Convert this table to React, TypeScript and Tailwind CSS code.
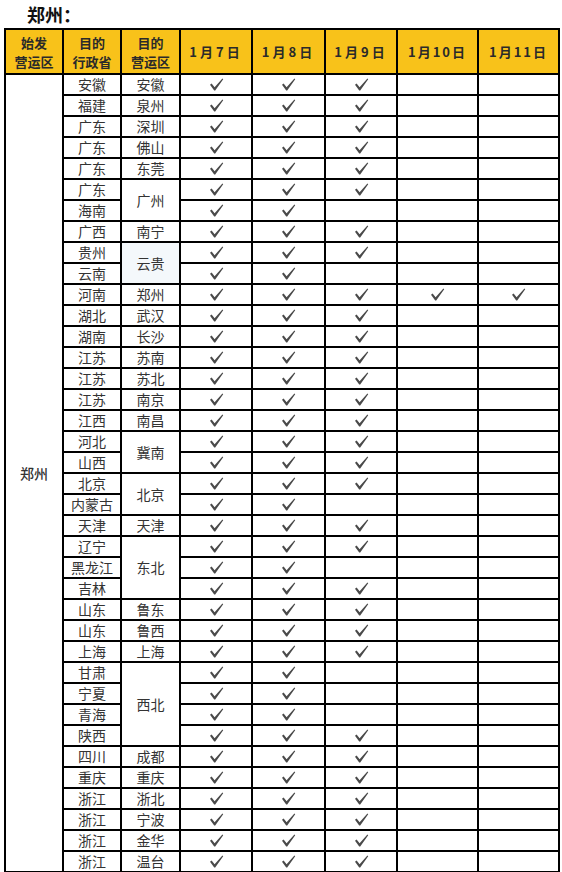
import React from "react";

type Row = { prov: string; area?: string; span?: number; checks: number };

const rows: Row[] = [
  { prov: "安徽", area: "安徽", checks: 3 },
  { prov: "福建", area: "泉州", checks: 3 },
  { prov: "广东", area: "深圳", checks: 3 },
  { prov: "广东", area: "佛山", checks: 3 },
  { prov: "广东", area: "东莞", checks: 3 },
  { prov: "广东", area: "广州", span: 2, checks: 3 },
  { prov: "海南", checks: 2 },
  { prov: "广西", area: "南宁", checks: 3 },
  { prov: "贵州", area: "云贵", span: 2, checks: 3 },
  { prov: "云南", checks: 2 },
  { prov: "河南", area: "郑州", checks: 5 },
  { prov: "湖北", area: "武汉", checks: 3 },
  { prov: "湖南", area: "长沙", checks: 3 },
  { prov: "江苏", area: "苏南", checks: 3 },
  { prov: "江苏", area: "苏北", checks: 3 },
  { prov: "江苏", area: "南京", checks: 3 },
  { prov: "江西", area: "南昌", checks: 3 },
  { prov: "河北", area: "冀南", span: 2, checks: 3 },
  { prov: "山西", checks: 3 },
  { prov: "北京", area: "北京", span: 2, checks: 3 },
  { prov: "内蒙古", checks: 2 },
  { prov: "天津", area: "天津", checks: 3 },
  { prov: "辽宁", area: "东北", span: 3, checks: 3 },
  { prov: "黑龙江", checks: 2 },
  { prov: "吉林", checks: 3 },
  { prov: "山东", area: "鲁东", checks: 3 },
  { prov: "山东", area: "鲁西", checks: 3 },
  { prov: "上海", area: "上海", checks: 3 },
  { prov: "甘肃", area: "西北", span: 4, checks: 2 },
  { prov: "宁夏", checks: 2 },
  { prov: "青海", checks: 2 },
  { prov: "陕西", checks: 3 },
  { prov: "四川", area: "成都", checks: 3 },
  { prov: "重庆", area: "重庆", checks: 3 },
  { prov: "浙江", area: "浙北", checks: 3 },
  { prov: "浙江", area: "宁波", checks: 3 },
  { prov: "浙江", area: "金华", checks: 3 },
  { prov: "浙江", area: "温台", checks: 3 },
];

const dates = ["1月7日", "1月8日", "1月9日", "1月10日", "1月11日"];
const dateCls = [
  "w-[72px] tracking-[3px]",
  "w-[73px] tracking-[3px]",
  "w-[72px] tracking-[3px]",
  "w-[81px] tracking-[2px]",
  "w-[81px] tracking-[2px]",
];

const cell = "border-2 border-black p-0 text-center align-middle";

function Check() {
  return (
    <svg width="15" height="13" viewBox="0 0 15 13" className="mx-auto block">
      <polygon points="1,6.8 2.6,5.6 5.6,9.2 13.4,0.6 14.2,1.2 6.2,12.4 5.2,12.4" fill="#4a4a4a" />
    </svg>
  );
}

export default function App() {
  return (
    <div
      className="w-[562px] h-[872px] bg-white overflow-hidden"
      style={{ fontFamily: '"Noto Sans CJK SC", "Noto Sans", sans-serif' }}
    >
      <div className="h-[28px] pl-[27px] pt-[3px] text-[18px] font-bold leading-[22px] text-[#111]">
        郑州：
      </div>
      <table className="ml-[4px] w-[555px] border-collapse table-fixed">
        <thead>
          <tr className="h-[45px] bg-[#f8c21a] text-[13px] font-bold text-[#2a2a2a]">
            <th className={`${cell} w-[58px] leading-[19px]`}>
              始发
              <br />
              营运区
            </th>
            <th className={`${cell} w-[58px] leading-[19px]`}>
              目的
              <br />
              行政省
            </th>
            <th className={`${cell} w-[59px] leading-[19px]`}>
              目的
              <br />
              营运区
            </th>
            {dates.map((d, i) => (
              <th key={d} className={`${cell} ${dateCls[i]}`}>
                {d}
              </th>
            ))}
          </tr>
        </thead>
        <tbody className="text-[14px] text-[#333]">
          {rows.map((r, i) => (
            <tr key={i} className="h-[21px]">
              {i === 0 && (
                <td rowSpan={rows.length} className={`${cell} font-medium text-[#333]`}>
                  郑州
                </td>
              )}
              <td className={`${cell} leading-[17px]`}>{r.prov}</td>
              {r.area && (
                <td
                  rowSpan={r.span ?? 1}
                  className={`${cell} leading-[17px] ${r.area === "云贵" ? "bg-[#f4f8fb]" : ""}`}
                >
                  {r.area}
                </td>
              )}
              {dates.map((d, j) => (
                <td key={d} className={`${cell} leading-[17px]`}>
                  {j < r.checks && (j < 3 || r.checks === 5) ? <Check /> : null}
                </td>
              ))}
            </tr>
          ))}
        </tbody>
      </table>
    </div>
  );
}
